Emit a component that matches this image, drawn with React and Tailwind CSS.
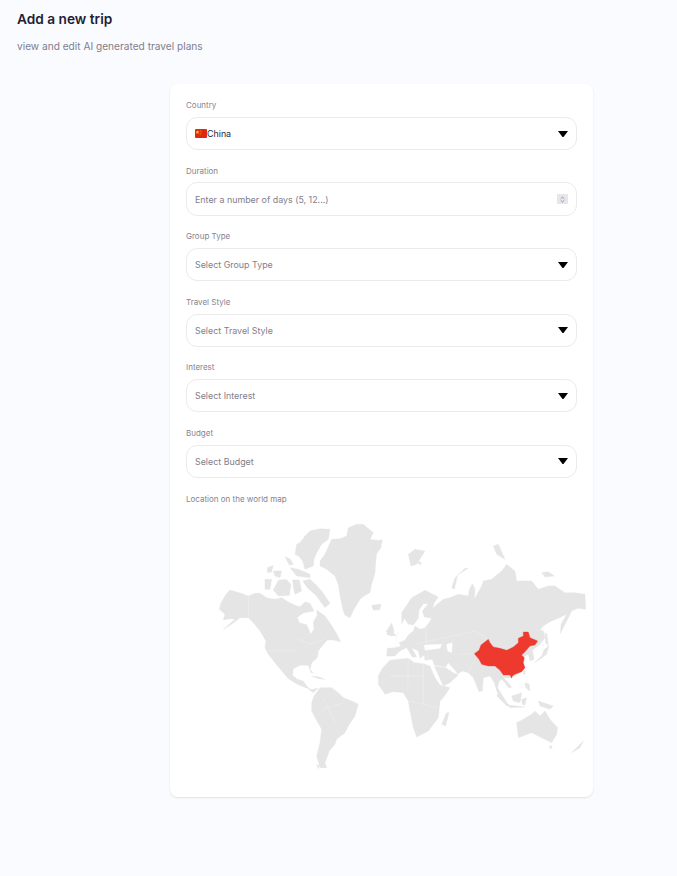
import React from 'react'

const fields = [
  { label: 'Country', value: 'China', flag: true },
  { label: 'Duration', placeholder: 'Enter a number of days (5, 12...)', number: true },
  { label: 'Group Type', placeholder: 'Select Group Type' },
  { label: 'Travel Style', placeholder: 'Select Travel Style' },
  { label: 'Interest', placeholder: 'Select Interest' },
  { label: 'Budget', placeholder: 'Select Budget' },
]

// left half of the map, coords are 3x from x=210 y=515
const west = [
  '28,280 32,262 48,235 60,222 88,230 115,240 135,232 150,232 170,245 195,250 215,245 235,258 255,268 270,272 285,258 300,262 312,285 295,288 278,292 262,305 268,320 290,326 302,355 312,340 310,318 322,298 320,282 345,300 358,318 372,340 385,362 392,378 372,372 352,372 338,388 325,405 322,425 305,440 300,460 310,470 303,470 295,448 270,448 250,458 248,478 262,490 280,495 290,510 300,520 288,515 262,505 235,488 215,465 195,440 175,415 165,395 168,375 150,345 130,320 115,305 90,305 65,325 40,340 75,310 60,308 40,312 45,295',
  '330,135 345,115 365,70 390,68 410,60 415,35 440,25 460,25 490,50 480,70 518,75 505,95 500,110 497,140 495,170 485,205 480,230 462,240 450,250 432,280 420,305 405,298 400,285 390,240 385,205 375,180 350,160 330,150',
  '270,80 285,60 300,45 330,38 360,40 355,70 335,85 320,110 312,130 310,150 285,160 278,135 268,122 255,115 260,85',
  '278,195 300,190 320,208 335,225 360,262 345,275 330,255 320,240 292,215',
  '165,190 185,190 180,220 165,220',
  '172,155 190,148 185,168 172,170',
  '190,165 215,165 210,185 195,180',
  '205,193 228,190 243,205 238,238 205,240 190,222',
  '248,192 268,192 275,225 255,235 250,215',
  '225,122 240,128 250,145 238,148',
  '240,155 265,160 300,175 300,185 260,180',
  '305,560 312,540 330,515 365,515 385,530 400,545 425,555 445,565 435,600 415,630 405,650 380,670 375,685 358,705 345,740 350,755 330,755 320,720 330,680 335,640 318,610 305,585',
  '295,520 310,530 325,515 310,520',
  '305,480 325,482 345,490 325,488',
  '485,268 510,265 505,280 490,282',
  '545,320 552,345 548,360 530,355 537,338',
  '320,745 328,750 325,758',
]

// right half of the map, coords are 3x from x=375 y=530
const east = [
  '35,375 37,352 60,350 78,345 72,335 90,328 100,312 115,300 120,285 135,295 150,290 162,275 170,262 148,258 142,240 160,218 145,218 132,238 130,262 115,282 100,280 88,262 80,280 80,245 110,200 150,178 190,198 178,215 172,232 205,205 225,200 250,190 280,195 283,175 292,158 300,175 298,205 320,165 325,150 350,145 380,120 395,100 420,120 425,150 450,150 470,150 490,175 520,165 540,165 570,185 600,185 630,190 632,235 608,232 590,240 578,265 565,290 556,308 558,280 575,250 550,262 525,272 505,285 495,297 505,300 510,320 495,340 472,358 478,385 465,390 460,370 445,378 442,395 450,412 430,430 405,440 385,440 395,450 410,468 402,472 390,455 380,445 372,452 368,470 380,490 395,515 388,510 365,480 358,455 345,435 325,440 322,480 312,482 295,440 280,425 262,420 248,430 242,420 220,395 212,408 178,402 172,385 150,388 148,372 135,382 130,360 110,350 125,378 112,378 95,350 75,360 60,375',
  '10,435 22,412 45,388 70,385 100,382 118,395 145,398 165,405 180,440 195,462 225,470 205,500 195,510 190,560 175,580 160,600 125,618 115,590 105,540 100,510 85,485 55,482 30,490 10,460',
  '178,405 212,410 235,425 250,432 225,455 205,465',
  '215,545 222,545 212,585 200,580',
  '425,575 445,565 470,550 480,540 495,555 510,540 525,565 548,590 545,610 530,635 500,620 470,605 430,620',
  '590,665 625,630 615,650',
  '522,645 532,645 528,655',
  '510,305 516,310 520,345 512,335',
  '478,395 500,375 508,355 522,345 515,370 495,385',
  '368,485 405,525 395,525 366,495',
  '400,522 450,528 405,530',
  '410,495 440,485 435,515 415,510',
  '440,505 455,500 450,522 442,520',
  '490,510 535,525 525,535 495,525',
  '450,455 462,458 465,480 452,470',
  '230,170 240,140 270,112 280,112 248,132 238,175',
  '100,70 120,55 150,60 125,100 108,105',
  '125,90 140,95 135,102',
  '355,45 370,40 390,85 365,70',
  '500,125 520,122 538,135 510,138',
  '35,300 48,280 55,305 65,315 40,312',
  '33,300 42,295 42,310',
  '0,225 18,220 15,235 0,238',
  '0,35 20,25 18,50 0,75',
]

const holes = [
  '215,340 232,335 230,365 218,360',
  '148,342 200,340 195,352 150,358',
]

const china = '298,368 312,358 318,342 340,325 345,335 355,348 375,352 395,358 415,348 430,335 430,322 445,315 445,303 460,303 465,320 488,330 480,342 465,345 450,362 440,372 448,380 445,395 450,410 440,422 420,430 412,435 410,442 405,432 385,432 375,418 360,405 340,405 320,400 312,385'

function WorldMap() {
  return (
    <svg viewBox="186 510 400 268" className="block w-[400px] h-[268px]">
      <g transform="translate(210 515) scale(0.3333)" fill="#e5e5e5" stroke="#e5e5e5" strokeLinejoin="round">
        {west.map((p) => <polygon key={p} points={p} />)}
        <path d="M115 240V305M262 368L300 385L345 370M170 405H260M340 545L375 620M340 580L400 560" fill="none" stroke="#f0f0f0" strokeWidth="1.5" />
      </g>
      <g transform="translate(375 530) scale(0.3333)" fill="#e5e5e5" stroke="#e5e5e5" strokeLinejoin="round">
        {east.map((p) => <polygon key={p} points={p} />)}
        {holes.map((p) => <polygon key={p} points={p} fill="#fff" stroke="#fff" />)}
        {/* rough country borders */}
        <path d="M100 382L98 480M45 435H150M145 400V520M100 510L190 530M120 340L210 320M150 290L160 385M215 320L300 300L340 325M250 370L300 368M280 420L300 390M60 350L70 300" fill="none" stroke="#f0f0f0" strokeWidth="1.5" />
        <polygon points={china} fill="#ee3a2e" stroke="#ee3a2e" />
        <polygon points="447,418 452,420 448,432 445,428" fill="#e5e5e5" />
      </g>
    </svg>
  )
}

function Flag() {
  return (
    <svg viewBox="0 0 12 9" className="w-3 h-[9px] shrink-0">
      <rect width="12" height="9" rx="1" fill="#de2910" />
      <polygon points="2.5,1.2 3,2.6 4.4,2.6 3.3,3.5 3.7,4.9 2.5,4 1.3,4.9 1.7,3.5 .6,2.6 2,2.6" fill="#ffde00" />
      <circle cx="5.2" cy="1.4" r=".4" fill="#ffde00" />
      <circle cx="6" cy="2.6" r=".4" fill="#ffde00" />
      <circle cx="6" cy="4" r=".4" fill="#ffde00" />
      <circle cx="5.2" cy="5.1" r=".4" fill="#ffde00" />
    </svg>
  )
}

function Field({ field }) {
  const size = field.number ? 'h-[34px] -mt-[0.6px] -mb-[0.4px]' : 'h-[33px]'
  return (
    <div className="flex flex-col gap-[7px]">
      <label className="h-[10px] leading-[10px] text-[8px] text-[#85848f]">{field.label}</label>
      <div className={`${size} flex items-center justify-between pl-[8px] pr-[8px] bg-white border border-[#ebebee] rounded-[11px] text-[8.9px]`}>
        {field.flag ? (
          <span className="flex items-center text-[#1f1f36]">
            <Flag />
            {field.value}
          </span>
        ) : (
          <span className={field.number ? 'pt-px text-[#7f7e8c]' : 'text-[#7f7e8c]'}>{field.placeholder}</span>
        )}
        {field.number ? (
          <span className="w-[11px] h-[10px] bg-[#e6e6ec] flex items-center justify-center">
            <svg viewBox="0 0 8 8" className="w-[7px] h-[7px]" fill="none" stroke="#85858f" strokeWidth="0.9">
              <path d="M2 3L4 1.2L6 3M2 5L4 6.8L6 5" />
            </svg>
          </span>
        ) : (
          <svg viewBox="0 0 10 6" className="w-[10px] h-[6px]">
            <polygon points="0,0 10,0 5.5,6 4.5,6" fill="#000" />
          </svg>
        )}
      </div>
    </div>
  )
}

export default function App() {
  return (
    <div className="min-h-[876px] bg-[#fafbfe] font-['Inter',sans-serif] pt-[10px]">
      <div className="pl-[17px]">
        <h1 className="text-[13.7px] leading-[18px] font-semibold text-[#1f1f36]">Add a new trip</h1>
        <p className="mt-[11px] text-[10.15px] leading-[14px] text-[#7f7e8c]">view and edit AI generated travel plans</p>
      </div>
      <div className="ml-[170px] mt-[31px] w-[423px] h-[713px] bg-white rounded-[8px] shadow-[0_1px_2px_rgba(0,0,0,0.1)] px-4 pt-4 flex flex-col gap-[15.6px]">
        {fields.map((f) => <Field key={f.label} field={f} />)}
        <div className="flex flex-col gap-[7px]">
          <label className="h-[10px] leading-[10px] text-[8px] text-[#85848f]">Location on the world map</label>
          <WorldMap />
        </div>
      </div>
    </div>
  )
}
